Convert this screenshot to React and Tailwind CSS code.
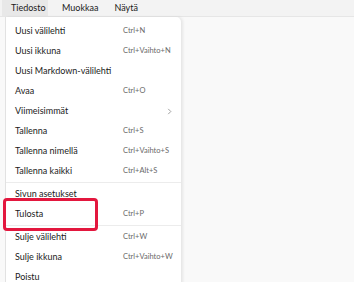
import React from 'react'

const groups = [
  [
    { label: 'Uusi välilehti', key: 'Ctrl+N' },
    { label: 'Uusi ikkuna', key: 'Ctrl+Vaihto+N' },
    { label: 'Uusi Markdown-välilehti' },
    { label: 'Avaa', key: 'Ctrl+O' },
    { label: 'Viimeisimmät', sub: true },
    { label: 'Tallenna', key: 'Ctrl+S' },
    { label: 'Tallenna nimellä', key: 'Ctrl+Vaihto+S' },
    { label: 'Tallenna kaikki', key: 'Ctrl+Alt+S' },
  ],
  [
    { label: 'Sivun asetukset' },
    { label: 'Tulosta', key: 'Ctrl+P', marked: true },
  ],
  [
    { label: 'Sulje välilehti', key: 'Ctrl+W' },
    { label: 'Sulje ikkuna', key: 'Ctrl+Vaihto+W' },
    { label: 'Poistu' },
  ],
]

const MenuItem = ({ item }) => (
  <div className="relative flex h-[20px] items-center pl-[9px] pr-[8px]">
    <span className="w-[108px] text-[9px] text-[#1b1b1b]">{item.label}</span>
    {item.key && <span className="text-[7.5px] text-[#6a6a6a]">{item.key}</span>}
    {item.sub && (
      <svg className="ml-auto h-[7px] w-[7px] text-[#777]" viewBox="0 0 8 8" fill="none">
        <path d="M2.5 1 L5.5 4 L2.5 7" stroke="currentColor" strokeWidth="0.8" />
      </svg>
    )}
    {item.marked && (
      <div className="absolute left-[-3px] top-[-6px] h-[33px] w-[95px] rounded-[4px] border-[3px] border-[#e3173e]" />
    )}
  </div>
)

export default function App() {
  return (
    <div
      className="flex h-[282px] w-[354px] flex-col overflow-hidden bg-[#f9f9f9]"
      style={{ fontFamily: 'Lato, "Noto Sans", sans-serif' }}
    >
      <div className="flex h-[17px] shrink-0 items-stretch border-b border-[#e6e6e6] bg-[#f3f3f3] text-[9px] text-[#1b1b1b]">
        <div className="ml-[2px] flex w-[46px] items-center bg-[#e8e8e8] pl-[9px]">Tiedosto</div>
        <div className="ml-[14px] flex items-center">Muokkaa</div>
        <div className="ml-[16px] flex items-center">Näytä</div>
      </div>
      <div className="flex-1">
        <div className="ml-[5px] h-full w-[176px] rounded-tr-[5px] border-l border-[#e2e2e2] bg-white pt-[4px] shadow-[2px_0_3px_rgba(0,0,0,0.08)]">
          {groups.map((g, i) => (
            <div key={i}>
              {i > 0 && <div className="my-[1px] h-px bg-[#ececec]" />}
              {g.map((item) => (
                <MenuItem key={item.label} item={item} />
              ))}
            </div>
          ))}
        </div>
      </div>
    </div>
  )
}
